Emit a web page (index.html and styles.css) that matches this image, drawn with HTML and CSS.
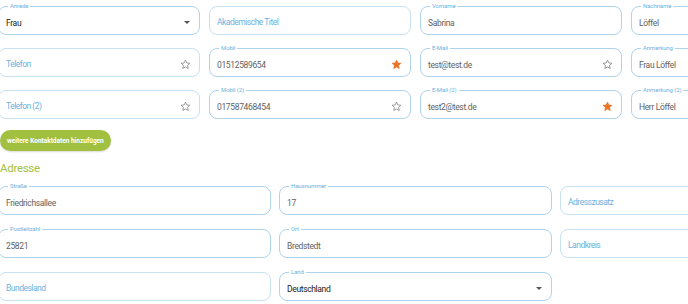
FILE: index.html
```html
<!DOCTYPE html>
<html lang="de">
<head>
    <meta charset="UTF-8" />
    <meta name="viewport" content="width=device-width, initial-scale=1.0" />
    <title>Kontakt</title>
    <link rel="stylesheet" href="styles.css">
</head>
<body>
    <svg width="0" height="0" class="defs">
        <symbol id="star" viewBox="0 0 24 24">
            <path d="M12 2.5l2.9 6.1 6.6.8-4.9 4.6 1.3 6.6L12 17.3l-5.9 3.3 1.3-6.6-4.9-4.6 6.6-.8z" />
        </symbol>
    </svg>

    <div class="page">
        <div class="grid four">
            <div class="field filled select">
                <span class="label">Anrede</span>
                <span class="value dark">Frau</span>
                <span class="arrow"></span>
            </div>
            <div class="field">
                <span class="placeholder">Akademische Titel</span>
            </div>
            <div class="field filled">
                <span class="label">Vorname</span>
                <span class="value">Sabrina</span>
            </div>
            <div class="field filled">
                <span class="label">Nachname</span>
                <span class="value">Löffel</span>
            </div>

            <div class="field">
                <span class="placeholder">Telefon</span>
                <svg class="star"><use href="#star" /></svg>
            </div>
            <div class="field filled">
                <span class="label">Mobil</span>
                <span class="value">01512589654</span>
                <svg class="star on"><use href="#star" /></svg>
            </div>
            <div class="field filled">
                <span class="label">E-Mail</span>
                <span class="value">test@test.de</span>
                <svg class="star"><use href="#star" /></svg>
            </div>
            <div class="field filled">
                <span class="label">Anmerkung</span>
                <span class="value">Frau Löffel</span>
            </div>

            <div class="field">
                <span class="placeholder">Telefon (2)</span>
                <svg class="star"><use href="#star" /></svg>
            </div>
            <div class="field filled">
                <span class="label">Mobil (2)</span>
                <span class="value">017587468454</span>
                <svg class="star"><use href="#star" /></svg>
            </div>
            <div class="field filled">
                <span class="label">E-Mail (2)</span>
                <span class="value">test2@test.de</span>
                <svg class="star on"><use href="#star" /></svg>
            </div>
            <div class="field filled">
                <span class="label">Anmerkung (2)</span>
                <span class="value">Herr Löffel</span>
            </div>
        </div>

        <button class="add-btn">weitere Kontaktdaten hinzufügen</button>

        <h2>Adresse</h2>

        <div class="grid three">
            <div class="field filled">
                <span class="label">Straße</span>
                <span class="value">Friedrichsallee</span>
            </div>
            <div class="field filled">
                <span class="label">Hausnummer</span>
                <span class="value">17</span>
            </div>
            <div class="field">
                <span class="placeholder">Adresszusatz</span>
            </div>

            <div class="field filled">
                <span class="label">Postleitzahl</span>
                <span class="value">25821</span>
            </div>
            <div class="field filled">
                <span class="label">Ort</span>
                <span class="value">Bredstedt</span>
            </div>
            <div class="field">
                <span class="placeholder">Landkreis</span>
            </div>

            <div class="field">
                <span class="placeholder">Bundesland</span>
            </div>
            <div class="field filled select">
                <span class="label">Land</span>
                <span class="value dark">Deutschland</span>
                <span class="arrow"></span>
            </div>
        </div>
    </div>
</body>
</html>
```

FILE: styles.css
```css
:root {
    --border: #c7e1f1;
    --border-filled: #aed3ec;
    --label: #6cb2de;
    --text: #5f5f5f;
    --dark: #222;
    --green: #a2c03f;
    --orange: #ea7327;
}
body {
    margin: 0;
    font-family: Roboto, 'Noto Sans', sans-serif;
    background: #fff;
    overflow: hidden;
}
.defs {
    position: absolute;
}
.page {
    margin-left: -2px;
    padding-top: 6px;
}
.grid {
    display: grid;
}
.four {
    grid-template-columns: repeat(4, 202px);
    column-gap: 9px;
    row-gap: 13px;
}
.three {
    grid-template-columns: repeat(3, 273px);
    column-gap: 8px;
    row-gap: 14px;
}
.field {
    position: relative;
    height: 29px;
    box-sizing: border-box;
    border: 1px solid var(--border);
    border-radius: 8px;
    display: flex;
    align-items: center;
    padding: 3px 7px 0;
    font-size: 8.5px;
    letter-spacing: -0.35px;
}
.field.filled {
    border-color: var(--border-filled);
}
.label {
    position: absolute;
    top: -5px;
    left: 9px;
    padding: 0 2px;
    background: #fff;
    color: var(--label);
    font-size: 6px;
    line-height: 8px;
    letter-spacing: -0.1px;
}
.value {
    color: var(--text);
    padding-top: 1px;
}
.value.dark {
    color: var(--dark);
}
.placeholder {
    color: var(--label);
    letter-spacing: -0.5px;
}
.arrow {
    margin-left: auto;
    margin-right: 2px;
    border-left: 3px solid transparent;
    border-right: 3px solid transparent;
    border-top: 3px solid #555;
}
.star {
    margin-left: auto;
    margin-right: 1px;
    width: 11px;
    height: 11px;
    fill: none;
    stroke: #777;
    stroke-width: 1.6;
    stroke-linejoin: round;
}
.star.on {
    fill: var(--orange);
    stroke: var(--orange);
}
.add-btn {
    display: block;
    margin: 11px 0 0 2px;
    height: 21px;
    padding: 0 7px;
    border: none;
    border-radius: 11px;
    background: var(--green);
    color: #fff;
    font-family: inherit;
    font-size: 6.5px;
    font-weight: bold;
    box-shadow: 0 1px 2px rgba(0,0,0,0.15);
}
h2 {
    margin: 10px 0 10px 2px;
    color: var(--green);
    font-size: 11.5px;
    font-weight: 400;
    line-height: 15px;
    letter-spacing: -0.3px;
}
```
